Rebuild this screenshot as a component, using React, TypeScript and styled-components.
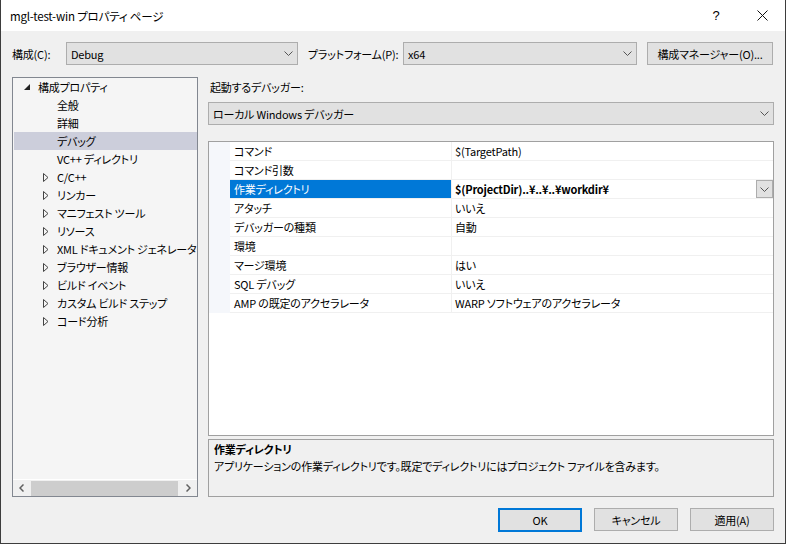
import React from "react";
import styled, { createGlobalStyle } from "styled-components";

const FONT = `"Noto Sans CJK JP", "Noto Sans", sans-serif`;

const GlobalStyle = createGlobalStyle`
  html, body {
    margin: 0;
    padding: 0;
    background: #ffffff;
  }
  body {
    font-family: ${FONT};
    font-size: 11px;
    letter-spacing: -0.2px;
    color: #000;
    font-feature-settings: "palt";
  }
  * {
    box-sizing: border-box;
  }
`;

const Window = styled.div`
  width: 786px;
  height: 544px;
  display: flex;
  flex-direction: column;
  border: 1px solid #3d3d3d;
  border-top: none;
  background: #f0f0f0;
  overflow: hidden;
`;

const TitleBar = styled.div`
  height: 31px;
  flex: none;
  display: flex;
  align-items: center;
  background: #ffffff;
  padding-left: 9px;
`;

const TitleText = styled.div`
  flex: 1;
  font-size: 11.5px;
  line-height: 16px;
`;

const CaptionButton = styled.div`
  width: 46px;
  height: 31px;
  display: flex;
  align-items: center;
  justify-content: center;
  font-family: "Liberation Sans", sans-serif;
  font-size: 13px;
`;

const Body = styled.div`
  flex: 1;
  display: flex;
  flex-direction: column;
  padding: 11px;
`;

const TopRow = styled.div`
  height: 23px;
  display: flex;
  align-items: center;
`;

const Label = styled.div<{ $w: number; $ml?: number }>`
  width: ${(p) => p.$w}px;
  margin-left: ${(p) => p.$ml ?? 0}px;
  line-height: 16px;
  white-space: nowrap;
`;

const Combo = styled.div<{ $w?: number }>`
  ${(p) => (p.$w ? `width: ${p.$w}px;` : "width: 100%;")}
  height: 23px;
  flex: none;
  display: flex;
  align-items: center;
  background: #e1e1e1;
  border: 1px solid #adadad;
  padding-left: 4px;
  padding-right: 4px;
`;

const ComboText = styled.div`
  flex: 1;
  line-height: 16px;
  white-space: nowrap;
`;

const PushButton = styled.div<{ $w: number; $default?: boolean }>`
  width: ${(p) => p.$w}px;
  height: ${(p) => (p.$default ? 24 : 23)}px;
  display: flex;
  align-items: center;
  justify-content: center;
  background: #e1e1e1;
  border: ${(p) => (p.$default ? "2px solid #0078d7" : "1px solid #adadad")};
  line-height: 16px;
  white-space: nowrap;
`;

const Main = styled.div`
  height: 420px;
  margin-top: 12px;
  display: flex;
  gap: 10px;
`;

const TreePanel = styled.div`
  width: 186px;
  flex: none;
  display: flex;
  flex-direction: column;
  background: #f5f5f5;
  border: 1px solid #828790;
`;

const TreeList = styled.div`
  flex: 1;
  padding: 0 0 0 1px;
  overflow: hidden;
`;

const TreeRow = styled.div<{ $level: number; $selected?: boolean }>`
  height: 18px;
  display: flex;
  align-items: center;
  padding-left: ${(p) => 7 + p.$level * 19}px;
  background: ${(p) => (p.$selected ? "#cccedb" : "transparent")};
  white-space: nowrap;
  line-height: 16px;
`;

const Expander = styled.div`
  width: 17px;
  flex: none;
  display: flex;
  align-items: center;
  padding-left: 3px;
`;

const HScroll = styled.div`
  height: 17px;
  flex: none;
  display: flex;
  align-items: center;
  border-top: 1px solid #ffffff;
  background: #f0f0f0;
`;

const ScrollArrow = styled.div`
  width: 17px;
  height: 16px;
  flex: none;
  display: flex;
  align-items: center;
  justify-content: center;
`;

const ScrollThumb = styled.div`
  flex: 1;
  height: 15px;
  margin: 0 2px 0 1px;
  background: #cdcdcd;
`;

const RightCol = styled.div`
  flex: 1;
  display: flex;
  flex-direction: column;
`;

const SectionLabel = styled.div`
  height: 25px;
  padding: 2px 0 0 2px;
  line-height: 16px;
`;

const Grid = styled.div`
  margin-top: 16px;
  flex: 1;
  background: #ffffff;
  border: 1px solid #a0a0a0;
`;

const GridRow = styled.div`
  height: 19px;
  display: flex;
`;

const Margin = styled.div`
  width: 21px;
  flex: none;
  background: #f5f7fb;
`;

const NameCell = styled.div<{ $selected?: boolean }>`
  width: 222px;
  flex: none;
  display: flex;
  align-items: center;
  padding-left: 4px;
  border-bottom: 1px solid #f0f0f0;
  border-right: 1px solid #f0f0f0;
  background: ${(p) => (p.$selected ? "#0078d7" : "transparent")};
  color: ${(p) => (p.$selected ? "#ffffff" : "#000000")};
  line-height: 16px;
  white-space: nowrap;
`;

const ValueCell = styled.div<{ $bold?: boolean }>`
  flex: 1;
  display: flex;
  align-items: center;
  padding-left: 3px;
  border-bottom: 1px solid #f0f0f0;
  font-weight: ${(p) => (p.$bold ? 700 : 400)};
  line-height: 16px;
  white-space: nowrap;
`;

const ValueText = styled.div`
  flex: 1;
`;

const CellDrop = styled.div`
  width: 17px;
  height: 18px;
  display: flex;
  align-items: center;
  justify-content: center;
  background: #e1e1e1;
  border: 1px solid #adadad;
  align-self: flex-start;
`;

const DescPane = styled.div`
  height: 58px;
  margin-top: 3px;
  flex: none;
  border: 1px solid #a0a0a0;
  background: #f0f0f0;
  padding: 1px 0 0 5px;
`;

const DescTitle = styled.div`
  font-weight: 700;
  line-height: 17px;
`;

const DescText = styled.div`
  line-height: 17px;
`;

const Footer = styled.div`
  margin-top: 11px;
  height: 24px;
  display: flex;
  justify-content: flex-end;
  gap: 12px;
`;

const Chevron = () => (
  <svg width="9" height="5" viewBox="0 0 9 5">
    <path d="M0.5 0.5 L4.5 4.5 L8.5 0.5" fill="none" stroke="#555" strokeWidth="1" />
  </svg>
);

const OpenGlyph = () => (
  <svg width="6" height="6" viewBox="0 0 6 6">
    <polygon points="6,0 6,6 0,6" fill="#222" />
  </svg>
);

const ClosedGlyph = () => (
  <svg width="6" height="9" viewBox="0 0 6 9">
    <polygon points="0.5,0.5 5,4.5 0.5,8.5" fill="none" stroke="#444" strokeWidth="1" />
  </svg>
);

type TreeItem = { label: string; level: number; state?: "open" | "closed"; selected?: boolean };

const treeItems: TreeItem[] = [
  { label: "構成プロパティ", level: 0, state: "open" },
  { label: "全般", level: 1 },
  { label: "詳細", level: 1 },
  { label: "デバッグ", level: 1, selected: true },
  { label: "VC++ ディレクトリ", level: 1 },
  { label: "C/C++", level: 1, state: "closed" },
  { label: "リンカー", level: 1, state: "closed" },
  { label: "マニフェスト ツール", level: 1, state: "closed" },
  { label: "リソース", level: 1, state: "closed" },
  { label: "XML ドキュメント ジェネレーター", level: 1, state: "closed" },
  { label: "ブラウザー情報", level: 1, state: "closed" },
  { label: "ビルド イベント", level: 1, state: "closed" },
  { label: "カスタム ビルド ステップ", level: 1, state: "closed" },
  { label: "コード分析", level: 1, state: "closed" },
];

type Prop = { name: string; value: string; selected?: boolean };

const props: Prop[] = [
  { name: "コマンド", value: "$(TargetPath)" },
  { name: "コマンド引数", value: "" },
  { name: "作業ディレクトリ", value: "$(ProjectDir)..¥..¥..¥workdir¥", selected: true },
  { name: "アタッチ", value: "いいえ" },
  { name: "デバッガーの種類", value: "自動" },
  { name: "環境", value: "" },
  { name: "マージ環境", value: "はい" },
  { name: "SQL デバッグ", value: "いいえ" },
  { name: "AMP の既定のアクセラレータ", value: "WARP ソフトウェアのアクセラレータ" },
];

export default function App() {
  return (
    <>
      <GlobalStyle />
      <Window>
        <TitleBar>
          <TitleText>mgl-test-win プロパティ ページ</TitleText>
          <CaptionButton>?</CaptionButton>
          <CaptionButton>
            <svg width="11" height="11" viewBox="0 0 11 11">
              <path d="M0.5 0.5 L10.5 10.5 M10.5 0.5 L0.5 10.5" stroke="#111" strokeWidth="1" />
            </svg>
          </CaptionButton>
        </TitleBar>

        <Body>
          <TopRow>
            <Label $w={54}>構成(C):</Label>
            <Combo $w={232}>
              <ComboText>Debug</ComboText>
              <Chevron />
            </Combo>
            <Label $w={95} $ml={10}>プラットフォーム(P):</Label>
            <Combo $w={234}>
              <ComboText>x64</ComboText>
              <Chevron />
            </Combo>
            <Label $w={10} />
            <PushButton $w={126}>構成マネージャー(O)...</PushButton>
          </TopRow>

          <Main>
            <TreePanel>
              <TreeList>
                {treeItems.map((t) => (
                  <TreeRow key={t.label} $level={t.level} $selected={t.selected}>
                    <Expander>
                      {t.state === "open" && <OpenGlyph />}
                      {t.state === "closed" && <ClosedGlyph />}
                    </Expander>
                    {t.label}
                  </TreeRow>
                ))}
              </TreeList>
              <HScroll>
                <ScrollArrow>
                  <svg width="5" height="8" viewBox="0 0 5 8">
                    <path d="M4.5 0.5 L1 4 L4.5 7.5" fill="none" stroke="#606060" strokeWidth="1.5" />
                  </svg>
                </ScrollArrow>
                <ScrollThumb />
                <ScrollArrow>
                  <svg width="5" height="8" viewBox="0 0 5 8">
                    <path d="M0.5 0.5 L4 4 L0.5 7.5" fill="none" stroke="#606060" strokeWidth="1.5" />
                  </svg>
                </ScrollArrow>
              </HScroll>
            </TreePanel>

            <RightCol>
              <SectionLabel>起動するデバッガー:</SectionLabel>
              <Combo>
                <ComboText>ローカル Windows デバッガー</ComboText>
                <Chevron />
              </Combo>
              <Grid>
                {props.map((p) => (
                  <GridRow key={p.name}>
                    <Margin />
                    <NameCell $selected={p.selected}>{p.name}</NameCell>
                    <ValueCell $bold={p.selected}>
                      <ValueText>{p.value}</ValueText>
                      {p.selected && (
                        <CellDrop>
                          <Chevron />
                        </CellDrop>
                      )}
                    </ValueCell>
                  </GridRow>
                ))}
              </Grid>
              <DescPane>
                <DescTitle>作業ディレクトリ</DescTitle>
                <DescText>
                  アプリケーションの作業ディレクトリです。既定でディレクトリにはプロジェクト ファイルを含みます。
                </DescText>
              </DescPane>
            </RightCol>
          </Main>

          <Footer>
            <PushButton $w={84} $default>OK</PushButton>
            <PushButton $w={84}>キャンセル</PushButton>
            <PushButton $w={84}>適用(A)</PushButton>
          </Footer>
        </Body>
      </Window>
    </>
  );
}
